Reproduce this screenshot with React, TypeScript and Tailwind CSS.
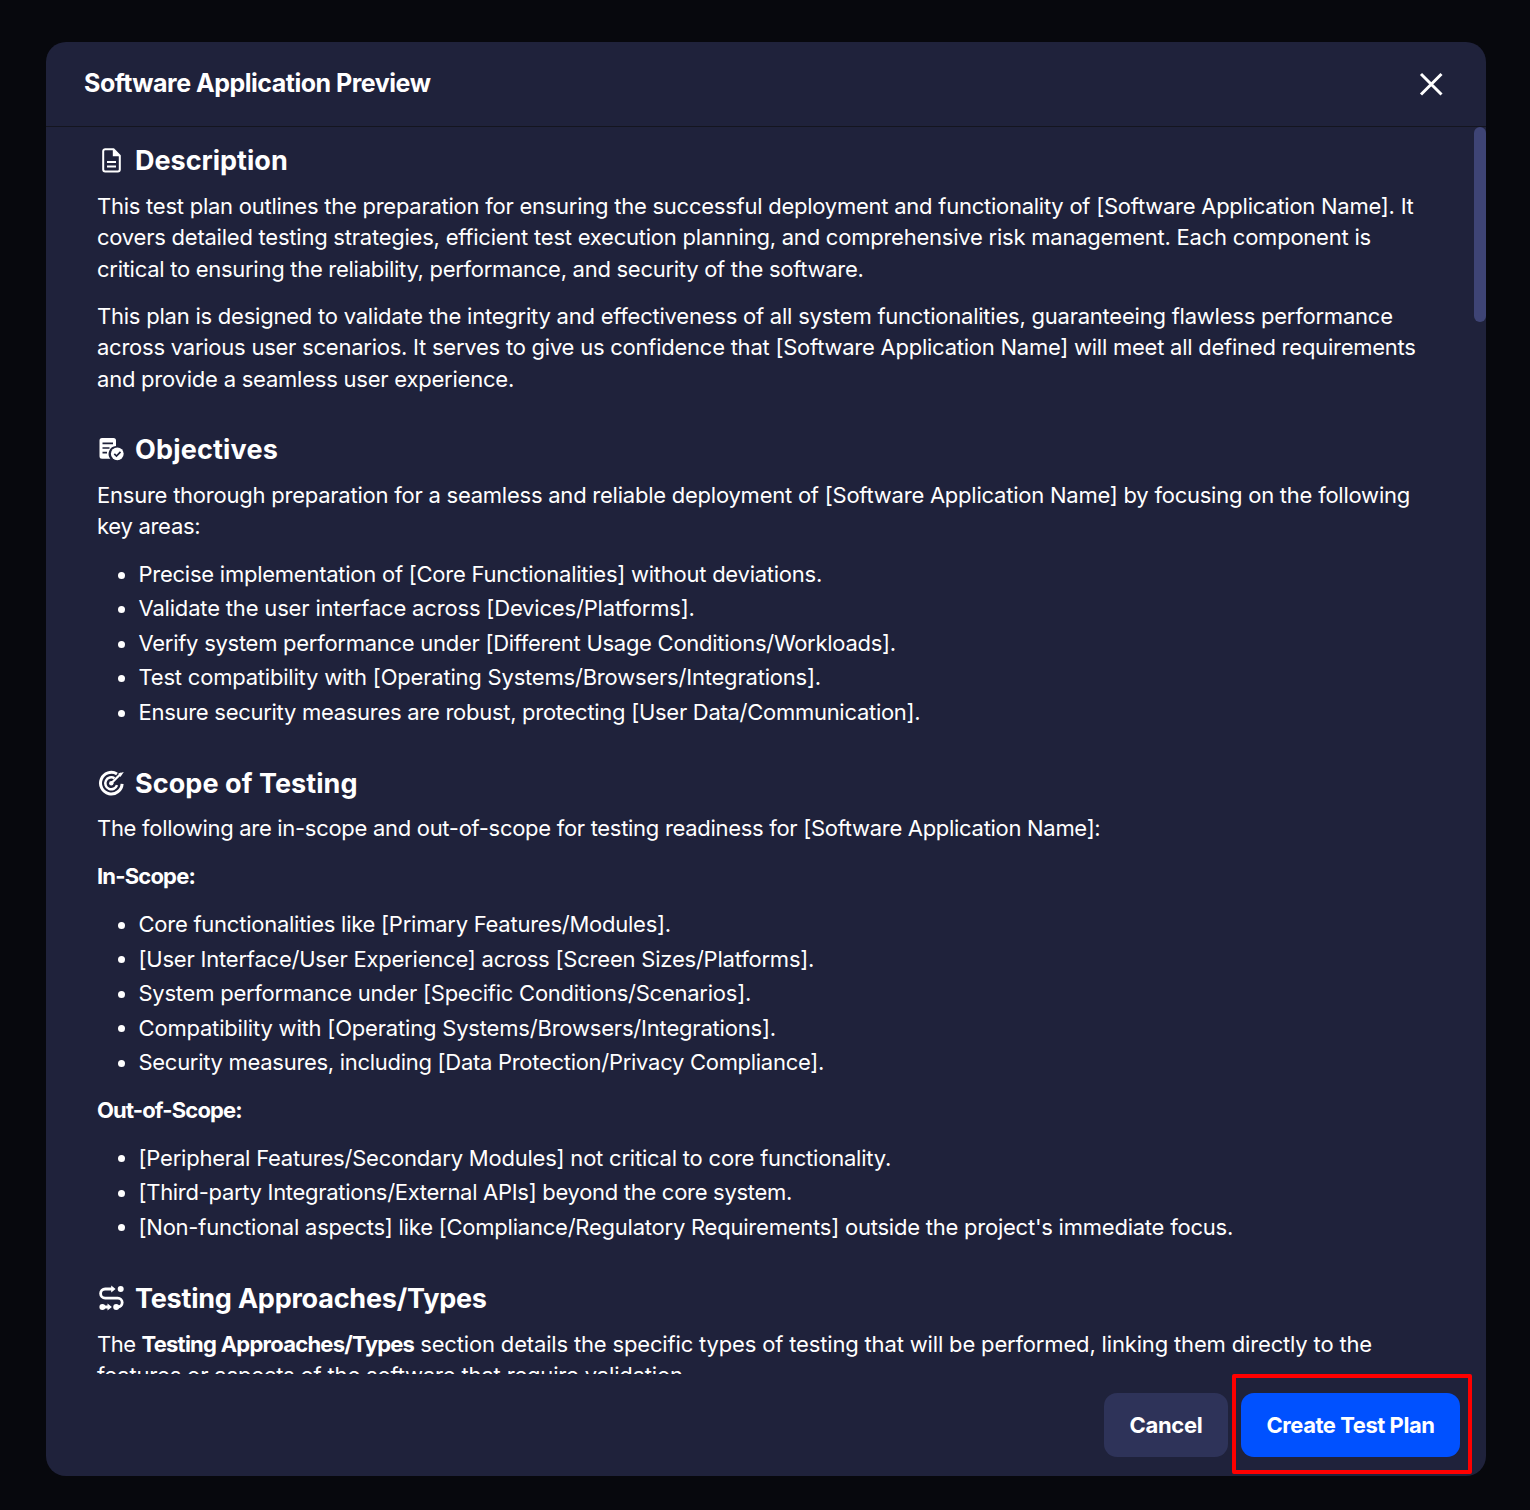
import React, { ReactNode } from "react";

type Line = [text: string, tracking: string];

function Paragraph({ lines, className = "" }: { lines: Line[]; className?: string }) {
  return (
    <p className={`text-[22px] leading-[31.5px] ${className}`}>
      {lines.map(([text, tracking]) => (
        <span key={text} className={`block whitespace-nowrap ${tracking}`}>
          {text}
        </span>
      ))}
    </p>
  );
}

function BulletList({ items }: { items: Line[] }) {
  return (
    <ul className="mt-[16.25px] flex flex-col gap-[3px] pl-[21px] text-[22px] leading-[31.5px]">
      {items.map(([text, tracking]) => (
        <li key={text} className={`flex items-center whitespace-nowrap ${tracking}`}>
          <span className="mr-[13.5px] mt-px size-[7px] shrink-0 rounded-full bg-white" />
          {text}
        </li>
      ))}
    </ul>
  );
}

function Heading({ icon, children, className = "" }: { icon: ReactNode; children: ReactNode; className?: string }) {
  return (
    <h2 className={`mb-3 flex h-9 items-center gap-[9px] text-[27px] font-bold ${className}`}>
      <span className="mb-[1.500px] ml-px size-7 shrink-0">{icon}</span>
      <span className="whitespace-nowrap pt-px">{children}</span>
    </h2>
  );
}

function DocumentIcon() {
  return (
    <svg viewBox="0 0 28 28" className="size-7" fill="none" stroke="white" strokeWidth="2">
      <path d="M15.500 3.200H7.200a2 2 0 0 0-2 2v18.300a2 2 0 0 0 2 2h12.600a2 2 0 0 0 2-2V9.700z" strokeLinejoin="round" />
      <path d="M14.800 3v7.200H22z" fill="white" stroke="none" />
      <path d="M9 16h9M9 20.500h9" />
    </svg>
  );
}

function ChecklistIcon() {
  return (
    <svg viewBox="0 0 28 28" className="size-7" fill="none">
      <path
        d="M4 3h11.500a2.500 2.500 0 0 1 2.500 2.500v5.400a8 8 0 0 0-5.700 12.900H4a2.500 2.500 0 0 1-2.500-2.500V5.500A2.500 2.500 0 0 1 4 3z"
        fill="white"
      />
      <path d="M4.500 8.300h10.500M4.500 13h7M4.500 17.700h4.500" stroke="#1f223b" strokeWidth="1.700" />
      <circle cx="19.300" cy="18.800" r="6.400" fill="white" />
      <path d="m16.300 18.900 2.200 2.200 4-4.200" stroke="#1f223b" strokeWidth="1.700" />
    </svg>
  );
}

function TargetIcon() {
  return (
    <svg viewBox="0 0 28 28" className="size-7" fill="none" stroke="white">
      <path d="M19 5A10.800 10.800 0 1 0 24.100 14.800" strokeWidth="3" />
      <path d="M16.500 9.200A6 6 0 1 0 19 16.200" strokeWidth="2.500" />
      <path d="m13.300 14.200 10-10" strokeWidth="2.300" />
      <path d="m20.300 4.600 5.500-1.600-3.400 5z" fill="white" stroke="none" />
      <circle cx="13.300" cy="14.200" r="2.200" fill="white" stroke="none" />
    </svg>
  );
}

function RouteIcon() {
  return (
    <svg viewBox="0 0 28 28" className="size-7" fill="none" stroke="white" strokeWidth="2.800">
      <path d="M14 5H7.200a4.600 4.600 0 0 0 0 9.200h12.600a4.400 4.400 0 0 1 0 8.800H18M5 23h6" />
      <path d="M13.200 1.500 17.600 5l-4.400 3.500zM9.500 19.500l4.400 3.500-4.400 3.500z" fill="white" stroke="none" />
      <g fill="white" stroke="none">
        <circle cx="22.700" cy="5" r="3" />
        <circle cx="4.400" cy="23" r="3" />
        <circle cx="18.200" cy="23" r="3" />
      </g>
    </svg>
  );
}

export default function App() {
  return (
    <div className="flex h-[1510px] w-[1530px] overflow-hidden bg-[#07080d] pl-[46px] pt-[42px] font-['Inter',sans-serif] text-white">
      <section className="flex h-[1434px] w-[1440px] flex-col overflow-hidden rounded-[20px] bg-[#1f223b]">
        <header className="flex h-[85px] shrink-0 items-center justify-between border-b border-[#14151f] pl-[38px] pr-[43px]">
          <h1 className="whitespace-nowrap pb-[2px] text-[25px] font-bold leading-8 tracking-[-0.490px]">
            Software Application Preview
          </h1>
          <button aria-label="Close" className="size-6">
            <svg viewBox="0 0 24 24" className="size-6" fill="none" stroke="white" strokeWidth="3">
              <path d="m2 2 20.500 20.500M22.500 2 2 22.500" />
            </svg>
          </button>
        </header>

        <div className="flex h-[1247px] shrink-0 justify-between overflow-hidden">
          <main className="pl-[51px] pt-[15.5px]">
            <Heading icon={<DocumentIcon />}>
              <span className="tracking-normal">Description</span>
            </Heading>
            <Paragraph
              lines={[
                ["This test plan outlines the preparation for ensuring the successful deployment and functionality of [Software Application Name]. It", "tracking-[-0.248px]"],
                ["covers detailed testing strategies, efficient test execution planning, and comprehensive risk management. Each component is", "tracking-[-0.230px]"],
                ["critical to ensuring the reliability, performance, and security of the software.", "tracking-[-0.280px]"],
              ]}
            />
            <Paragraph
              className="mt-[15.5px]"
              lines={[
                ["This plan is designed to validate the integrity and effectiveness of all system functionalities, guaranteeing flawless performance", "tracking-[-0.227px]"],
                ["across various user scenarios. It serves to give us confidence that [Software Application Name] will meet all defined requirements", "tracking-[-0.241px]"],
                ["and provide a seamless user experience.", "tracking-[-0.225px]"],
              ]}
            />

            <Heading icon={<ChecklistIcon />} className="mt-[36.500px]">
              <span className="tracking-[0.180px]">Objectives</span>
            </Heading>
            <Paragraph
              lines={[
                ["Ensure thorough preparation for a seamless and reliable deployment of [Software Application Name] by focusing on the following", "tracking-[-0.234px]"],
                ["key areas:", "tracking-[-0.280px]"],
              ]}
            />
            <BulletList
              items={[
                ["Precise implementation of [Core Functionalities] without deviations.", "tracking-[-0.248px]"],
                ["Validate the user interface across [Devices/Platforms].", "tracking-[-0.175px]"],
                ["Verify system performance under [Different Usage Conditions/Workloads].", "tracking-[-0.272px]"],
                ["Test compatibility with [Operating Systems/Browsers/Integrations].", "tracking-[-0.204px]"],
                ["Ensure security measures are robust, protecting [User Data/Communication].", "tracking-[-0.280px]"],
              ]}
            />

            <Heading icon={<TargetIcon />} className="mt-[37px]">
              <span className="tracking-[0.070px]">Scope of Testing</span>
            </Heading>
            <Paragraph
              lines={[
                ["The following are in-scope and out-of-scope for testing readiness for [Software Application Name]:", "tracking-[-0.297px]"],
              ]}
            />
            <Paragraph className="mt-[16.5px] font-bold" lines={[["In-Scope:", "tracking-[-0.820px]"]]} />
            <BulletList
              items={[
                ["Core functionalities like [Primary Features/Modules].", "tracking-[-0.248px]"],
                ["[User Interface/User Experience] across [Screen Sizes/Platforms].", "tracking-[-0.213px]"],
                ["System performance under [Specific Conditions/Scenarios].", "tracking-[-0.244px]"],
                ["Compatibility with [Operating Systems/Browsers/Integrations].", "tracking-[-0.190px]"],
                ["Security measures, including [Data Protection/Privacy Compliance].", "tracking-[-0.290px]"],
              ]}
            />
            <Paragraph className="mt-[16.25px] font-bold" lines={[["Out-of-Scope:", "tracking-[-0.850px]"]]} />
            <BulletList
              items={[
                ["[Peripheral Features/Secondary Modules] not critical to core functionality.", "tracking-[-0.214px]"],
                ["[Third-party Integrations/External APIs] beyond the core system.", "tracking-[-0.297px]"],
                ["[Non-functional aspects] like [Compliance/Regulatory Requirements] outside the project's immediate focus.", "tracking-[-0.229px]"],
              ]}
            />

            <Heading icon={<RouteIcon />} className="mt-[37.750px]">
              <span className="tracking-[-0.210px]">Testing Approaches/Types</span>
            </Heading>
            <p className="whitespace-nowrap text-[22px] leading-[31.5px]">
              <span className="tracking-[-0.450px]">The </span>
              <strong className="font-bold tracking-[-0.750px]">Testing Approaches/Types</strong>
              <span className="tracking-[-0.162px]">
                {" "}section details the specific types of testing that will be performed, linking them directly to the
              </span>
              <span className="block tracking-[-0.170px]">features or aspects of the software that require validation.</span>
            </p>
          </main>
          <div className="h-[195px] w-3 shrink-0 rounded-full bg-[#3e4475]" />
        </div>

        <footer className="flex grow items-start justify-end gap-[13px] pr-[26px] pt-[19px] text-[22px] font-bold">
          <button className="h-16 w-[124px] whitespace-nowrap rounded-[13px] bg-[#2e3359] tracking-[-0.300px]">Cancel</button>
          <div className="relative">
            <button className="h-16 w-[219px] whitespace-nowrap rounded-[13px] bg-[#0051ff] tracking-[-0.460px]">
              Create Test Plan
            </button>
            <div className="pointer-events-none absolute -left-[9px] -top-[19px] h-[100px] w-[240px] rounded-[2px] border-4 border-[#ff0000]" />
          </div>
        </footer>
      </section>
    </div>
  );
}
